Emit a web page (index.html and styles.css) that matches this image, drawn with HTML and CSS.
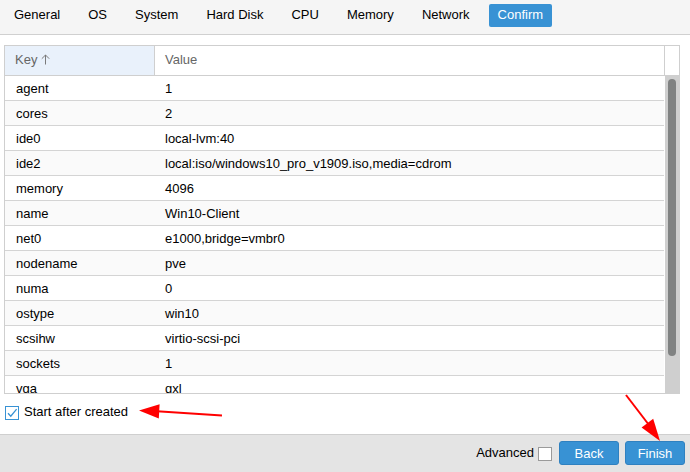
FILE: index.html
```html
<!DOCTYPE html>
<html>
<head>
<meta charset="utf-8">
<link rel="stylesheet" href="styles.css">
</head>
<body>
<div class="page">
  <div class="tabbar">
    <span class="tab">General</span>
    <span class="tab">OS</span>
    <span class="tab">System</span>
    <span class="tab">Hard Disk</span>
    <span class="tab">CPU</span>
    <span class="tab">Memory</span>
    <span class="tab">Network</span>
    <span class="tab active">Confirm</span>
  </div>

  <div class="grid">
    <div class="grid-head">
      <div class="hcell key sorted">Key
        <svg class="sort-icon" width="9" height="11" viewBox="0 0 9 11"><path d="M4.5 1 V10.5 M0.8 4.7 L4.5 1 L8.2 4.7" fill="none" stroke="#7a7a7a" stroke-width="1"/></svg>
      </div>
      <div class="hcell value">Value</div>
      <div class="hcell spacer"></div>
    </div>
    <div class="grid-body">
      <div class="rows">
        <div class="row"><div class="cell key">agent</div><div class="cell value">1</div></div>
        <div class="row"><div class="cell key">cores</div><div class="cell value">2</div></div>
        <div class="row"><div class="cell key">ide0</div><div class="cell value">local-lvm:40</div></div>
        <div class="row"><div class="cell key">ide2</div><div class="cell value">local:iso/windows10_pro_v1909.iso,media=cdrom</div></div>
        <div class="row"><div class="cell key">memory</div><div class="cell value">4096</div></div>
        <div class="row"><div class="cell key">name</div><div class="cell value">Win10-Client</div></div>
        <div class="row"><div class="cell key">net0</div><div class="cell value">e1000,bridge=vmbr0</div></div>
        <div class="row"><div class="cell key">nodename</div><div class="cell value">pve</div></div>
        <div class="row"><div class="cell key">numa</div><div class="cell value">0</div></div>
        <div class="row"><div class="cell key">ostype</div><div class="cell value">win10</div></div>
        <div class="row"><div class="cell key">scsihw</div><div class="cell value">virtio-scsi-pci</div></div>
        <div class="row"><div class="cell key">sockets</div><div class="cell value">1</div></div>
        <div class="row"><div class="cell key">vga</div><div class="cell value">qxl</div></div>
      </div>
      <div class="scroll-track"><div class="scroll-thumb"></div></div>
    </div>
  </div>

  <div class="start-row">
    <span class="checkbox checked">
      <svg width="14" height="14" viewBox="0 0 14 14"><path d="M3 7.2 L5.8 10.2 L11.6 3.2" fill="none" stroke="#3892d4" stroke-width="1.3"/></svg>
    </span>
    <span class="start-label">Start after created</span>
  </div>

  <div class="footer">
    <span class="adv-label">Advanced</span>
    <span class="checkbox plain"></span>
    <button class="btn back">Back</button>
    <button class="btn finish">Finish</button>
  </div>

  <svg class="annot" width="690" height="472" viewBox="0 0 690 472">
    <line x1="222" y1="415.5" x2="157" y2="411.3" stroke="#ff0000" stroke-width="2"/>
    <polygon points="139,410.5 159.6,404.2 158.8,418.6" fill="#ff0000"/>
    <line x1="626" y1="395" x2="649" y2="425" stroke="#ff0000" stroke-width="2"/>
    <polygon points="660,441 641.6,427.6 653.2,418.8" fill="#ff0000"/>
  </svg>
</div>
</body>
</html>
```

FILE: styles.css
```css
html, body {
  margin: 0;
  padding: 0;
  background: #ffffff;
}

.page {
  position: relative;
  width: 690px;
  height: 472px;
  overflow: hidden;
  font-family: "Liberation Sans", Arial, sans-serif;
  font-size: 13px;
  color: #000;
  display: flex;
  flex-direction: column;
}

.tabbar {
  height: 34px;
  background: #f5f5f5;
  border-bottom: 1px solid #d0d0d0;
  display: flex;
  align-items: flex-start;
  gap: 10px;
  padding-left: 5px;
  box-sizing: content-box;
  flex: none;
}

.tab {
  margin-top: 4px;
  height: 23px;
  line-height: 21px;
  padding: 0 9px;
  border-radius: 2px;
  color: #000;
  white-space: nowrap;
}

.tab.active {
  background: #3892d4;
  color: #ffffff;
}

.grid {
  margin: 10px 10px 0 4px;
  height: 347px;
  border: 1px solid #cfcfcf;
  display: flex;
  flex-direction: column;
  flex: none;
  overflow: hidden;
}

.grid-head {
  display: flex;
  height: 29px;
  border-bottom: 1px solid #cfcfcf;
  flex: none;
}

.hcell {
  display: flex;
  align-items: center;
  color: #666;
  box-sizing: border-box;
  padding-bottom: 2px;
}

.hcell.key {
  width: 150px;
  padding-left: 10px;
  background: #e9f1fb;
  border-right: 1px solid #cfcfcf;
}

.sort-icon {
  margin-left: 4px;
  margin-top: -1px;
}

.hcell.value {
  flex: 1;
  padding-left: 10px;
  border-right: 1px solid #cfcfcf;
}

.hcell.spacer {
  width: 14px;
}

.grid-body {
  display: flex;
  flex: 1;
  min-height: 0;
}

.rows {
  flex: 1;
  overflow: hidden;
}

.row {
  display: flex;
  height: 24px;
  border-bottom: 1px solid #d4d4d4;
  align-items: center;
}

.row:nth-child(even) {
  background: #fafafa;
}

.cell {
  padding-left: 10px;
  box-sizing: border-box;
  white-space: nowrap;
}

.cell.key {
  width: 150px;
  padding-left: 11px;
}

.cell.value {
  flex: 1;
}

.scroll-track {
  width: 14px;
  background: #cfcfcf;
  display: flex;
  justify-content: center;
  padding-top: 3px;
  box-sizing: border-box;
  margin-left: 1px;
}

.scroll-thumb {
  width: 8px;
  height: 277px;
  background: #808282;
  border-radius: 4px;
}

.start-row {
  height: 40px;
  display: flex;
  align-items: center;
  padding-left: 5px;
  padding-bottom: 3px;
  box-sizing: border-box;
  flex: none;
}

.checkbox {
  width: 14px;
  height: 14px;
  box-sizing: border-box;
  display: inline-block;
  flex: none;
}

.checkbox.checked {
  border: 1px solid #3892d4;
  background: #ffffff;
  position: relative;
}

.checkbox.checked svg {
  display: block;
  margin: -1px;
}

.start-label {
  margin-left: 5px;
  margin-top: -2px;
}

.checkbox.plain {
  border: 1px solid #9a9a9a;
  background: #ffffff;
  margin-left: 4px;
  margin-right: 7px;
}

.footer {
  flex: 1;
  background: #e4e4e4;
  border-top: 1px solid #cfcfcf;
  display: flex;
  align-items: flex-start;
  justify-content: flex-end;
  padding: 6px 5px 0 0;
}

.adv-label {
  line-height: 24px;
}

.checkbox.plain {
  margin-top: 6px;
}

.btn {
  width: 60px;
  height: 24px;
  border: 1px solid #2f81c0;
  border-radius: 3px;
  background: #3892d4;
  color: #ffffff;
  font-family: "Liberation Sans", Arial, sans-serif;
  font-size: 13px;
  padding: 0;
}

.btn.finish {
  margin-left: 6px;
}

.annot {
  position: absolute;
  left: 0;
  top: 0;
  pointer-events: none;
}
```
